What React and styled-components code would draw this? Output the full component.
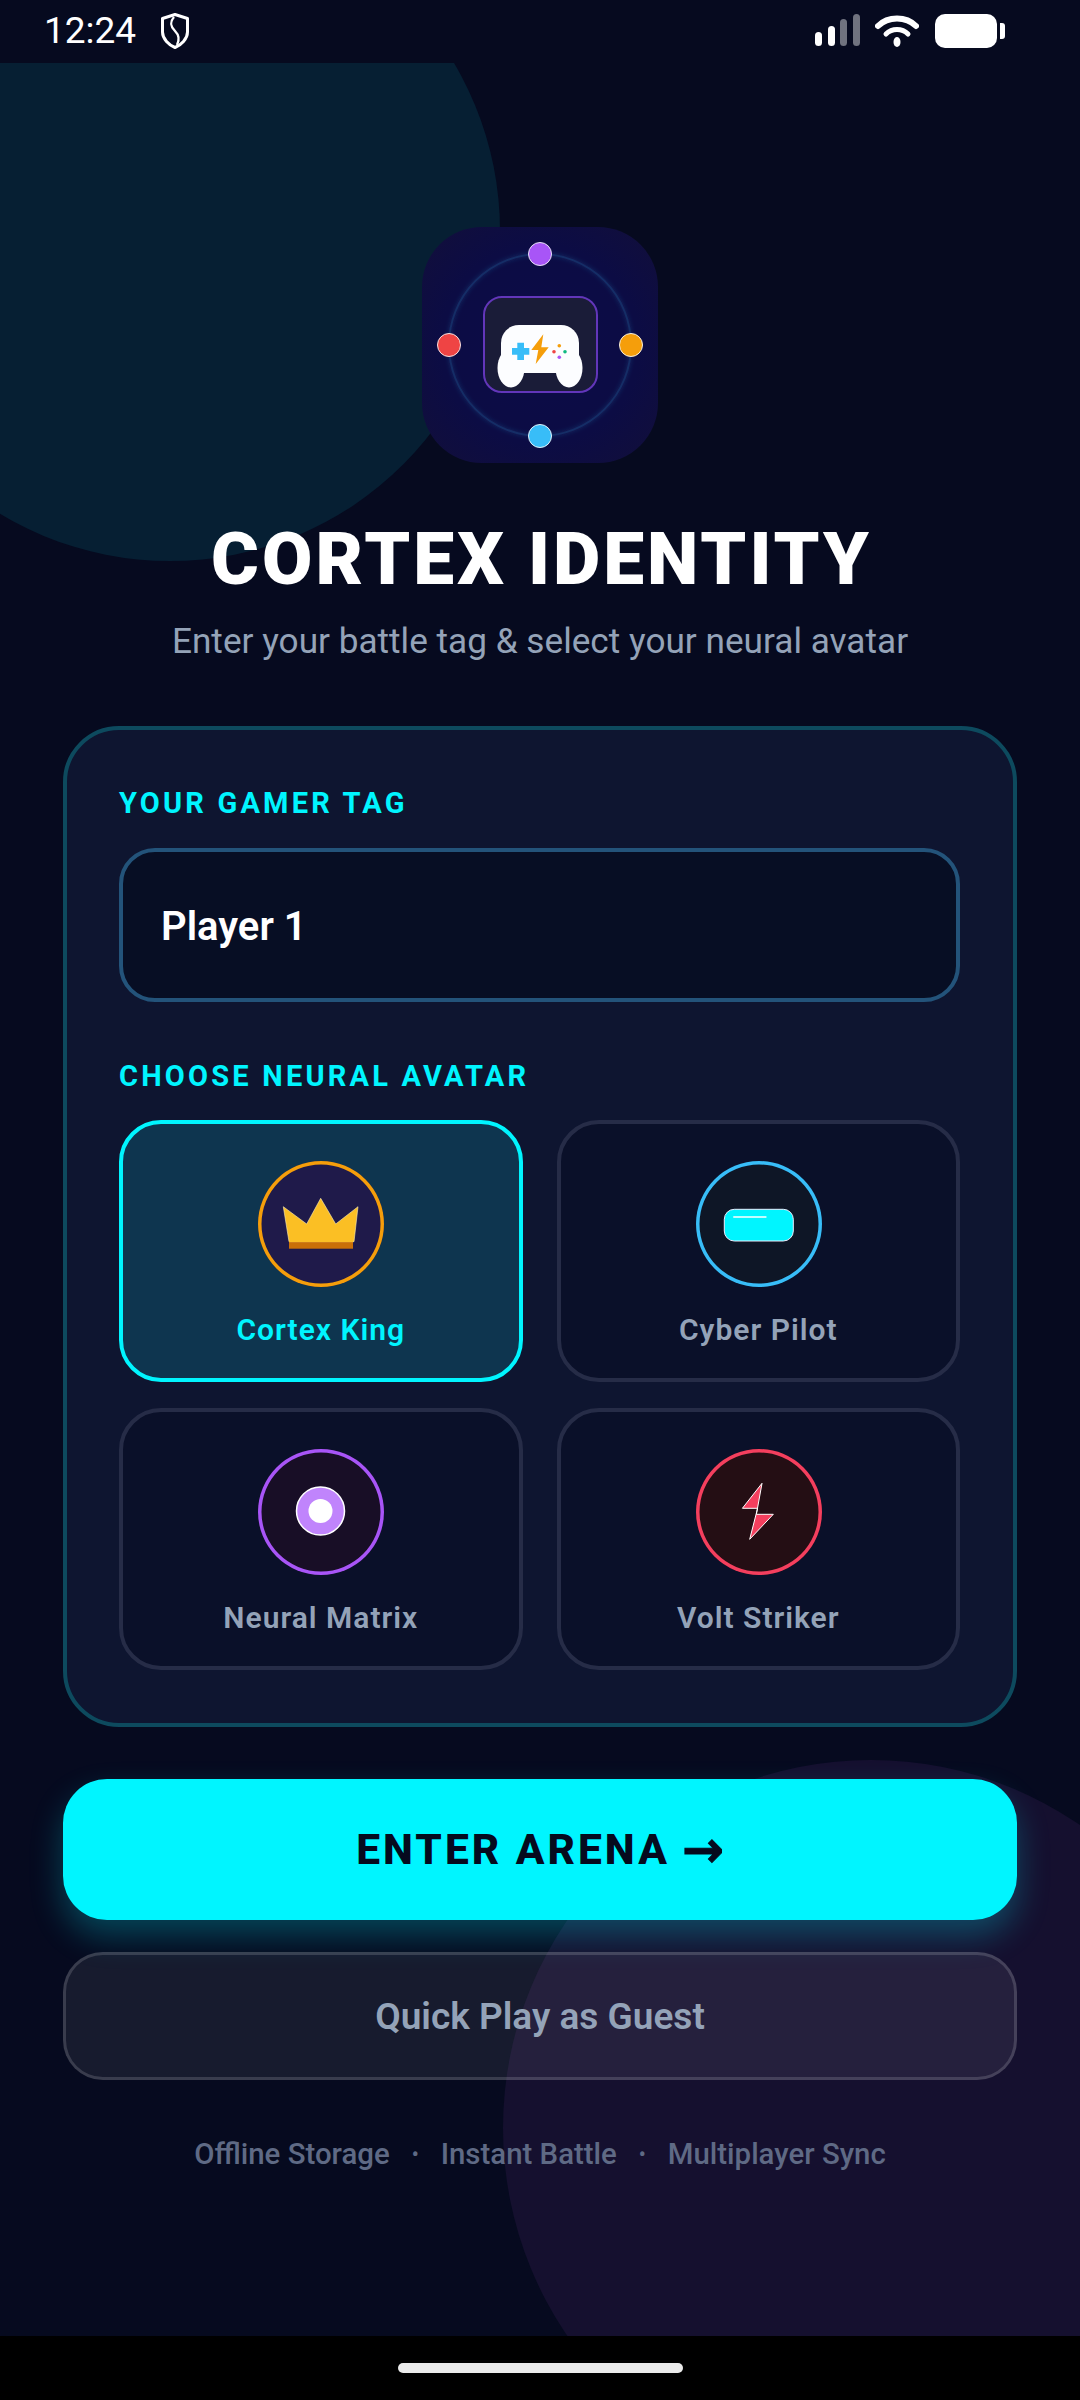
import React from "react";
import styled, { createGlobalStyle } from "styled-components";

const GlobalStyle = createGlobalStyle`
  html, body {
    margin: 0;
    padding: 0;
    background: #000;
  }
  * {
    box-sizing: border-box;
  }
`;

const AVATARS = [
  { id: "king", name: "Cortex King", ring: "#f59e0b", fill: "#1f1a4a", selected: true },
  { id: "pilot", name: "Cyber Pilot", ring: "#38bdf8", fill: "#0e1626" },
  { id: "matrix", name: "Neural Matrix", ring: "#a855f7", fill: "#180e26" },
  { id: "volt", name: "Volt Striker", ring: "#f43f5e", fill: "#240e14" }
];

function ShieldIcon() {
  return (
    <svg width="30" height="36" viewBox="0 0 30 36" fill="none">
      <path
        d="M15 1.5 L27.5 5.5 V19 C27.5 26 21 32 15 34.5 C9 32 2.5 26 2.5 19 V5.5 Z"
        stroke="#fff"
        strokeWidth="3"
        strokeLinejoin="round"
      />
      <path d="M14 4 C9 10 11 14 15 18 C19 22 20 26 17 32" stroke="#fff" strokeWidth="2.4" />
    </svg>
  );
}

function SignalIcon() {
  return (
    <svg width="46" height="34" viewBox="0 0 46 34">
      <rect x="0" y="18" width="7" height="14" rx="3.5" fill="#fff" />
      <rect x="13" y="12" width="7" height="20" rx="3.5" fill="#fff" />
      <rect x="25" y="5" width="7" height="27" rx="3.5" fill="#70737f" />
      <rect x="38" y="0" width="7" height="32" rx="3.5" fill="#70737f" />
    </svg>
  );
}

function WifiIcon() {
  return (
    <svg width="44" height="34" viewBox="0 0 44 34" fill="none">
      <path d="M3 12 C13 2 31 2 41 12" stroke="#fff" strokeWidth="6" strokeLinecap="round" />
      <path d="M11 20 C17 14 27 14 33 20" stroke="#fff" strokeWidth="5" strokeLinecap="round" />
      <ellipse cx="22" cy="28" rx="3.5" ry="5" fill="#fff" />
    </svg>
  );
}

function AppLogo() {
  return (
    <svg width="236" height="236" viewBox="0 0 236 236" fill="none">
      <defs>
        <filter id="ringGlow" x="-20%" y="-20%" width="140%" height="140%">
          <feGaussianBlur stdDeviation="2" />
        </filter>
      </defs>
      <circle cx="118" cy="118" r="91" stroke="#38bdf8" strokeOpacity="0.16" strokeWidth="3" filter="url(#ringGlow)" />
      <circle cx="118" cy="118" r="91" stroke="#38bdf8" strokeOpacity="0.12" strokeWidth="2" />
      <rect x="62" y="70" width="113" height="95" rx="18" fill="#1a1c38" stroke="#6236ba" strokeWidth="2" />

      <rect x="79" y="98" width="78" height="48" rx="18" fill="#fcfdff" />
      <ellipse cx="89" cy="141" rx="13.5" ry="19.5" fill="#fcfdff" />
      <ellipse cx="147" cy="141" rx="13.5" ry="19.5" fill="#fcfdff" />

      <path d="M90 121 H95.3 V115.7 H102 V121 H107.3 V127.7 H102 V133 H95.3 V127.7 H90 Z" fill="#38bdf8" />
      <path d="M121.3 107.3 L109.3 123 H116.3 L113.7 137 L126.7 120.3 H119.3 Z" fill="#f59e0b" />
      <circle cx="137.3" cy="118.7" r="1.8" fill="#f59e0b" />
      <circle cx="132" cy="124.7" r="1.8" fill="#ef4444" />
      <circle cx="143" cy="124.7" r="1.8" fill="#10b981" />
      <circle cx="137.3" cy="130.3" r="1.8" fill="#a855f7" />

      <circle cx="118" cy="27" r="11.5" fill="#a855f7" stroke="#e8e2f5" strokeWidth="1" />
      <circle cx="27" cy="118" r="11.5" fill="#ef4444" stroke="#f5e2e2" strokeWidth="1" />
      <circle cx="209" cy="118" r="11.5" fill="#f59e0b" stroke="#f5efe2" strokeWidth="1" />
      <circle cx="118" cy="209" r="11.5" fill="#38bdf8" stroke="#e2f2f9" strokeWidth="1" />
    </svg>
  );
}

function AvatarGlyph({ id }) {
  return (
    <svg width="126" height="126" viewBox="0 0 126 126">
      {id === "king" && (
        <>
          <rect x="31" y="80" width="64" height="7.7" fill="#c96f08" />
          <path
            d="M25.3 45.7 L48.7 63 L62.7 37.3 L77.7 63 L100 45.7 L96 80.7 H31 Z"
            fill="#fbbf24"
            stroke="#fdeeb4"
            strokeWidth="0.6"
          />
          <rect x="31" y="80" width="64" height="1" fill="#fbbf24" />
        </>
      )}
      {id === "pilot" && (
        <>
          <rect x="28.3" y="48.3" width="69" height="31.7" rx="10" fill="#00f5ff" stroke="#eef" strokeWidth="1" />
          <rect x="37" y="55" width="33.7" height="2" rx="1" fill="#fff" fillOpacity="0.75" />
        </>
      )}
      {id === "matrix" && (
        <>
          <circle cx="62.5" cy="62" r="24" fill="#c084fc" stroke="#fff" strokeWidth="1.5" />
          <circle cx="62.5" cy="62" r="12" fill="#fff" />
        </>
      )}
      {id === "volt" && (
        <path
          d="M66 34.3 L46.4 59.3 H61.6 L53.7 90.3 L77.3 65.3 H60.4 Z"
          fill="#f43f5e"
          stroke="#fff"
          strokeWidth="1"
        />
      )}
    </svg>
  );
}

export default function App() {
  return (
    <Screen>
      <GlobalStyle />
      <StatusBar>
        <StatusLeft>
          <Clock>12:24</Clock>
          <ShieldIcon />
        </StatusLeft>
        <StatusRight>
          <SignalIcon />
          <WifiIcon />
          <Battery />
          <BatteryNub />
        </StatusRight>
      </StatusBar>

      <Main>
        <TealOrb />
        <PurpleOrb />
        <Content>
          <LogoTile>
            <AppLogo />
          </LogoTile>
          <Title>CORTEX IDENTITY</Title>
          <Subtitle>Enter your battle tag &amp; select your neural avatar</Subtitle>

          <Card>
            <FieldLabel>YOUR GAMER TAG</FieldLabel>
            <TagInput defaultValue="Player 1" />
            <FieldLabel $spaced>CHOOSE NEURAL AVATAR</FieldLabel>
            <AvatarGrid>
              {AVATARS.map(a => (
                <AvatarCell key={a.id} $selected={a.selected}>
                  <AvatarCircle $ring={a.ring} $fill={a.fill}>
                    <AvatarGlyph id={a.id} />
                  </AvatarCircle>
                  <AvatarName $selected={a.selected}>{a.name}</AvatarName>
                </AvatarCell>
              ))}
            </AvatarGrid>
          </Card>

          <PrimaryButton>
            ENTER ARENA <Arrow>→</Arrow>
          </PrimaryButton>
          <GuestButton>Quick Play as Guest</GuestButton>

          <FooterRow>
            <span>Offline Storage</span>
            <FooterDot>•</FooterDot>
            <span>Instant Battle</span>
            <FooterDot>•</FooterDot>
            <span>Multiplayer Sync</span>
          </FooterRow>
        </Content>
      </Main>

      <NavBar>
        <HomePill />
      </NavBar>
    </Screen>
  );
}

const Screen = styled.div`
  width: 1080px;
  height: 2400px;
  display: flex;
  flex-direction: column;
  background: #060a1f;
  font-family: Roboto, "Liberation Sans", sans-serif;
  overflow: hidden;
`;

const StatusBar = styled.div`
  height: 63px;
  flex-shrink: 0;
  display: flex;
  align-items: center;
  justify-content: space-between;
  padding: 0 75px 2px 44px;
  color: #fff;
`;

const StatusLeft = styled.div`
  display: flex;
  align-items: center;
  gap: 24px;
`;

const Clock = styled.span`
  font-size: 37px;
  line-height: 40px;
`;

const StatusRight = styled.div`
  display: flex;
  align-items: center;
  gap: 11px;

  svg:first-child {
    margin-right: 3px;
  }
`;

const Battery = styled.div`
  width: 62px;
  height: 34px;
  margin-left: 5px;
  background: #fff;
  border-radius: 10px;
`;

const BatteryNub = styled.div`
  width: 5px;
  height: 16px;
  margin-left: -8px;
  background: #fff;
  border-radius: 0 3px 3px 0;
`;

const Main = styled.div`
  flex: 1;
  position: relative;
  overflow: hidden;
`;

const TealOrb = styled.div`
  position: absolute;
  left: -160px;
  top: -162px;
  width: 660px;
  height: 660px;
  border-radius: 50%;
  background: #061f33;
`;

const PurpleOrb = styled.div`
  position: absolute;
  left: 503px;
  top: 1697px;
  width: 736px;
  height: 736px;
  border-radius: 50%;
  background: #15102f;
`;

const Content = styled.div`
  position: relative;
  display: flex;
  flex-direction: column;
  align-items: center;
  padding: 164px 63px 0;
`;

const LogoTile = styled.div`
  width: 236px;
  height: 236px;
  border-radius: 60px;
  background: radial-gradient(circle, #0c0c48 0%, #0c0c44 60%, #120f3a 100%);
`;

const Title = styled.h1`
  margin: 54px 0 0 3px;
  font-size: 73px;
  line-height: 84px;
  font-weight: 900;
  letter-spacing: 3px;
  color: #fff;
  white-space: nowrap;
`;

const Subtitle = styled.p`
  margin: 18px 0 0;
  font-size: 35.2px;
  line-height: 44px;
  color: #94a3b8;
  white-space: nowrap;
`;

const Card = styled.div`
  width: 954px;
  margin-top: 63px;
  padding: 51px 53px 53px 52px;
  background: #0e1530;
  border: 4px solid #0d4a5e;
  border-radius: 56px;
`;

const FieldLabel = styled.div`
  font-size: 29px;
  line-height: 44px;
  font-weight: 700;
  letter-spacing: 3.2px;
  color: #00f5ff;
  margin: ${p => (p.$spaced ? "52px 0 22px" : "0 0 23px")};
`;

const TagInput = styled.input`
  display: block;
  width: 100%;
  height: 154px;
  padding: 3px 38px 0;
  background: #070e24;
  border: 4px solid #23537a;
  border-radius: 36px;
  outline: none;
  color: #fff;
  font-family: inherit;
  font-size: 40px;
  font-weight: 600;
`;

const AvatarGrid = styled.div`
  display: grid;
  grid-template-columns: 1fr 1fr;
  column-gap: 34px;
  row-gap: 26px;
`;

const AvatarCell = styled.div`
  height: 262px;
  padding: 37px 0 0 1px;
  display: flex;
  flex-direction: column;
  align-items: center;
  background: ${p => (p.$selected ? "#0e354f" : "#0a1029")};
  border: 4px solid ${p => (p.$selected ? "#00f5ff" : "#262c47")};
  border-radius: 42px;
`;

const AvatarCircle = styled.div`
  width: 126px;
  height: 126px;
  border-radius: 50%;
  background: ${p => p.$fill};
  box-shadow: inset 0 0 0 3.5px ${p => p.$ring};
`;

const AvatarName = styled.div`
  margin: 23px 0 0 -1px;
  font-size: 30px;
  line-height: 40px;
  font-weight: 600;
  letter-spacing: 1px;
  color: ${p => (p.$selected ? "#00f5ff" : "#94a3b8")};
`;

const PrimaryButton = styled.button`
  display: flex;
  align-items: center;
  justify-content: center;
  gap: 12px;
  width: 954px;
  height: 141px;
  margin-top: 52px;
  background: #00f5ff;
  border: none;
  border-radius: 44px;
  box-shadow: 0 16px 32px rgba(0, 245, 255, 0.25);
  color: #050a1e;
  font-family: inherit;
  font-size: 42.5px;
  font-weight: 800;
  letter-spacing: 3px;
`;

const Arrow = styled.span`
  font-family: "DejaVu Sans", sans-serif;
  font-size: 50px;
  line-height: 1;
  font-weight: 700;
  letter-spacing: 0;
  -webkit-text-stroke: 1px #050a1e;
`;

const GuestButton = styled.button`
  width: 954px;
  height: 128px;
  margin-top: 32px;
  background: rgba(255, 255, 255, 0.07);
  border: 3px solid rgba(255, 255, 255, 0.15);
  border-radius: 40px;
  color: #94a3b8;
  font-family: inherit;
  font-size: 37px;
  font-weight: 600;
`;

const FooterRow = styled.div`
  display: flex;
  align-items: center;
  justify-content: center;
  gap: 22px;
  margin-top: 54px;
  font-size: 29.4px;
  line-height: 40px;
  font-weight: 500;
  color: #5f6a85;
`;

const FooterDot = styled.span`
  font-size: 20px;
`;

const NavBar = styled.div`
  height: 64px;
  flex-shrink: 0;
  display: flex;
  justify-content: center;
  padding-top: 27px;
  background: #000;
`;

const HomePill = styled.div`
  width: 285px;
  height: 10px;
  border-radius: 5px;
  background: #ebebeb;
`;
